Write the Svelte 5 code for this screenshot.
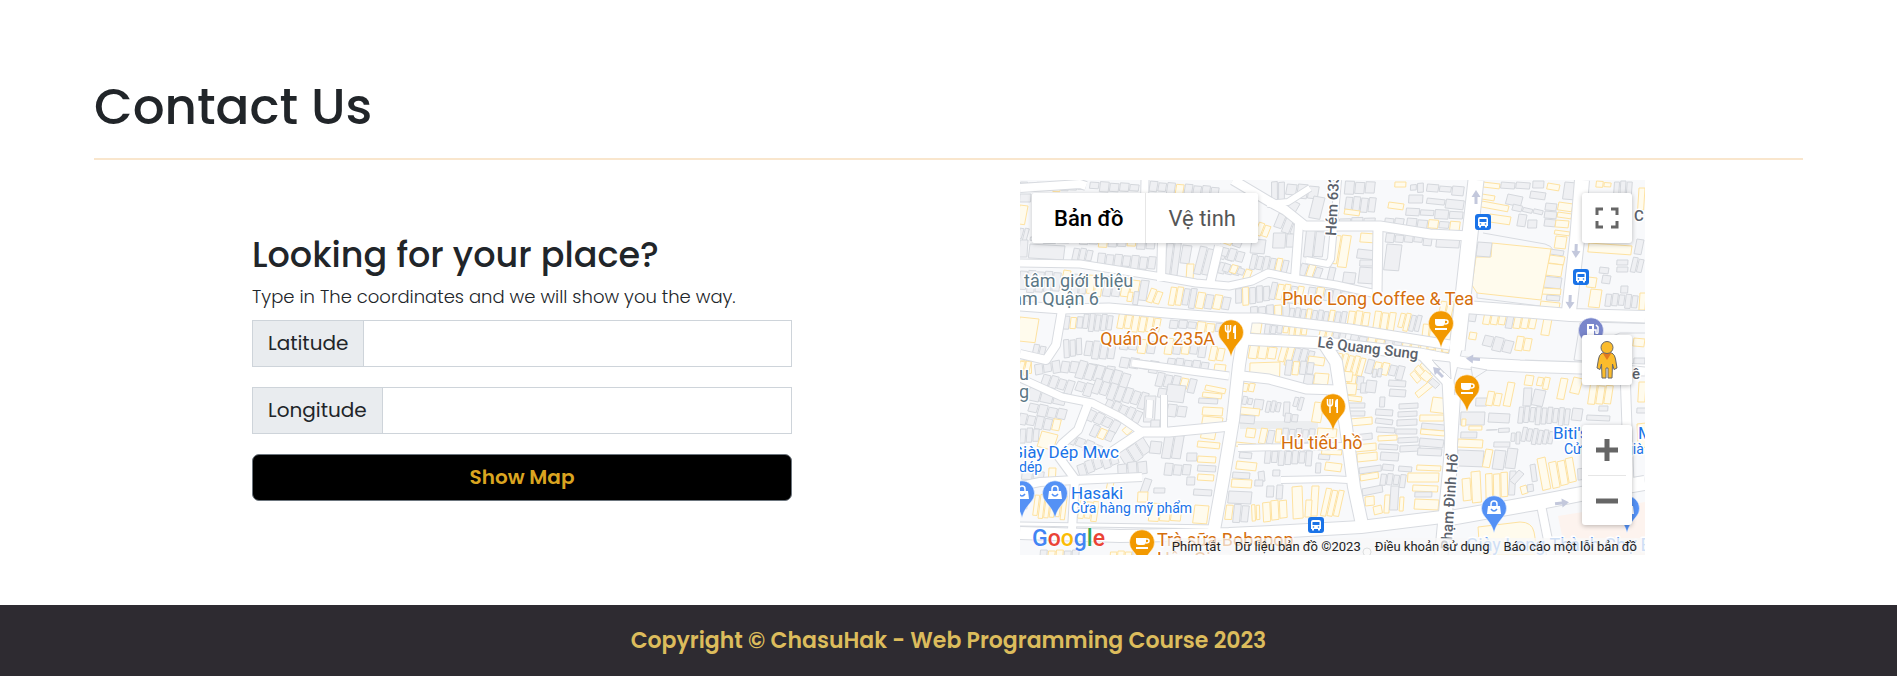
<script>
  let latitude = $state('');
  let longitude = $state('');

  // Each row of houses: start point, end point, depth, and one letter per plot (g grey, y yellow)
  const rows = [
    [0,2,66,3,9,'ggggyggg'],[70,1,120,4,10,'ggggg'],[130,1,200,7,12,'gggygggg'],[0,14,11,14,8,'g'],[0,25,8,26,19,'y'],[0,47,10,49,14,'gg'],
    [198,14,218,22,16,'ggg'],[199,32,230,42,13,'gggg'],[198,48,225,58,13,'gyg'],
    [0,60,8,60,17,'g'],[10,64,45,66,14,'g'],[54,67,74,70,14,'ggg'],[78,73,137,77,14,'ggggggg'],[10,56,50,57,7,'ggg'],[60,56,136,60,10,'ggyggygg'],
    [147,62,162,63,36,'gg'],[163,65,172,66,18,'g'],[167,84,174,84,16,'y'],[180,66,196,69,30,'gg'],[200,68,216,73,11,'gg'],[200,82,222,87,11,'ggg'],
    [0,90,42,92,22,'ggggg'],[44,90,51,91,20,'y'],[53,93,84,95,22,'ggyy'],[85,96,130,101,20,'ggyyg'],[108,111,120,112,13,'yg'],[131,108,144,112,16,'yy'],
    [151,106,178,109,20,'yygg'],[178,112,212,117,16,'ygyg'],
    [0,137,19,139,24,'y'],[14,164,27,166,13,'gg'],[0,180,12,179,16,'yy'],[44,136,64,137,13,'gyg'],[64,133,94,135,18,'ggggg'],[99,133,142,138,17,'yyyyyy'],[150,139,205,144,10,'gggyyg'],
    [43,160,62,158,18,'ggg'],[66,160,97,163,18,'gggg'],[101,157,137,161,14,'ggyg'],[101,176,140,182,12,'gggg'],[146,158,188,162,16,'ygygg'],[148,177,190,182,12,'ggggg'],[191,166,206,168,16,'yy'],[42,180,96,187,13,'gggggg'],
    [251,2,265,1,20,'gg'],[267,3,300,6,14,'ggg'],[270,19,280,24,12,'g'],[294,16,305,18,22,'g'],[325,1,356,2,13,'ggg'],[326,16,357,18,16,'gggg'],[325,29,340,31,5,'y'],[319,38,356,37,7,'ggg'],
    [375,2,386,2,5,'y'],[390,4,404,3,9,'gg'],[407,4,445,7,9,'ggg'],[369,22,384,24,6,'y'],[389,15,403,15,8,'g'],[407,17,445,21,9,'gg'],[386,28,444,31,9,'gggg'],[365,37,385,39,8,'gg'],[387,38,441,42,10,'ggygy'],
    [259,32,284,40,18,'ggg'],[239,42,252,46,15,'yy'],[232,59,246,60,14,'g'],[253,53,280,53,15,'gg'],[202,66,226,72,12,'ggg'],[232,74,270,80,17,'ggggyg'],[205,82,233,91,10,'gygy'],
    [286,50,306,51,27,'gg'],[312,54,332,56,32,'yy'],[341,53,356,54,9,'y'],[338,69,357,71,9,'g'],[340,80,356,80,6,'g'],[340,87,355,88,16,'g'],[324,92,336,93,11,'g'],[282,82,304,88,14,'gyg'],[310,87,316,88,14,'g'],
    [215,108,250,105,18,'gyggg'],[252,102,285,107,19,'gyygy'],[289,106,338,112,15,'gygggg'],[230,127,270,123,14,'gggyg'],[270,127,310,131,13,'gggyggg'],[310,130,328,132,16,'ygg'],[329,130,351,132,17,'yyy'],[355,131,377,133,20,'yyy'],[381,132,403,136,18,'yygg'],[403,144,440,146,28,'yyyyy'],[421,120,435,122,17,'yy'],
    [366,53,413,57,9,'ggggg'],[367,64,382,65,26,'g'],[417,56,440,57,11,'g'],
    [231,142,242,143,11,'y'],[245,144,288,147,10,'gggyyyy'],[300,149,327,153,10,'yygg'],[331,154,400,164,9,'ggyyggyy'],
    [230,164,258,167,15,'yyy'],[230,183,260,182,18,'y'],[262,164,296,171,20,'yyggg'],[289,176,305,178,8,'y'],[318,172,347,178,20,'yyyyy'],[348,179,386,187,14,'gyygg'],[322,194,345,196,15,'yyg'],
    [463,2,480,4,5,'y'],[481,1,511,3,8,'gg'],[511,11,526,13,7,'g'],[528,3,540,5,6,'y'],[545,2,557,3,17,'g'],[513,1,524,1,7,'g'],[526,23,537,24,7,'g'],[525,31,537,32,7,'g'],[525,39,536,40,7,'g'],[539,22,553,24,8,'y'],[538,32,552,34,5,'y'],[536,40,549,41,7,'y'],[535,50,550,52,4,'y'],[536,56,547,57,12,'y'],
    [462,14,475,16,5,'y'],[462,21,489,26,6,'y'],[470,34,491,37,8,'y'],[488,14,503,17,10,'g'],[493,24,524,31,6,'ggg'],[499,34,507,35,12,'g'],[508,40,517,40,8,'g'],[530,69,544,71,5,'g'],[530,75,545,77,8,'y'],[525,83,543,85,12,'y'],[523,96,542,98,11,'g'],[522,108,541,109,6,'y'],[527,115,540,116,5,'g'],[521,121,540,123,7,'y'],
    [449,131,457,132,10,'g'],[465,129,518,136,16,'yyygyyy'],[524,138,532,139,17,'y'],[465,154,495,161,14,'ggg'],[497,156,513,158,16,'yy'],[450,152,457,153,7,'y'],
    [576,1,592,2,6,'yy'],[594,1,613,1,20,'ggg'],[619,8,625,8,22,'y'],[569,63,612,66,9,'y'],[617,59,624,60,15,'g'],[597,80,608,80,5,'g'],[597,87,608,87,5,'g'],[580,87,589,88,6,'g'],[583,95,591,96,8,'g'],[568,97,577,98,10,'y'],[571,109,582,110,18,'y'],[586,113,619,115,14,'ggggg'],[613,77,625,79,15,'gg'],[601,106,608,106,7,'g'],[620,113,626,113,17,'y'],[614,158,625,159,8,'y'],[614,178,625,178,8,'g'],
    [0,180,12,182,16,'yy'],[14,185,40,180,12,'ggg'],[24,193,56,202,14,'gggg'],[60,180,112,194,18,'gggggg'],[58,200,75,205,13,'gg'],[76,198,130,214,17,'ggggggg'],[88,218,124,232,14,'ggggg'],[10,206,48,214,14,'ggg'],[10,222,48,230,12,'gggg'],[0,233,42,240,13,'ggggy'],
    [70,228,102,243,13,'gggg'],[74,244,96,253,12,'gyg'],[108,245,113,250,8,'y'],[50,253,84,266,12,'gggg'],[0,248,20,248,16,'ggg'],[22,251,38,255,16,'y'],[29,288,36,288,12,'y'],[2,290,25,291,11,'gg'],[56,285,96,270,14,'ggggg'],[98,274,123,256,18,'ggg'],[97,284,127,280,14,'ggg'],
    [125,216,136,216,26,'g'],[131,240,140,240,8,'g'],[138,192,178,200,14,'gggyg'],[148,204,166,206,17,'g'],[148,224,168,226,14,'gg'],[139,208,147,209,9,'g'],[186,205,206,209,5,'y'],[183,212,202,214,5,'y'],[179,218,198,219,5,'g'],[183,227,203,228,8,'y'],[183,236,203,238,8,'y'],[195,184,206,185,8,'y'],[145,253,165,255,27,'gg'],[131,261,142,262,12,'g'],[145,283,172,285,12,'ggg'],[182,250,196,252,8,'y'],[178,261,200,263,6,'y'],[167,273,177,273,8,'g'],[178,276,196,277,6,'y'],[178,285,196,286,6,'g'],[178,294,194,295,6,'y'],[167,297,175,297,8,'g'],[125,298,132,300,16,'g'],[118,312,128,312,10,'y'],[134,308,145,308,5,'g'],[174,309,192,310,6,'g'],
    [0,313,10,314,16,'yg'],[15,314,48,316,24,'yyyyyy'],[60,320,80,322,20,'yyy'],[88,301,94,302,9,'y'],[130,323,163,325,18,'yyy'],[175,325,189,326,18,'y'],[20,370,60,370,9,'gyygg'],[90,371,120,371,9,'yyyg'],
    [266,180,295,182,15,'gygg'],[295,193,309,194,11,'y'],[285,194,294,195,12,'g'],[223,202,236,204,10,'yy'],[223,216,234,218,8,'gg'],[235,219,244,220,10,'g'],[220,227,240,229,7,'y'],[247,220,262,222,13,'ggg'],[264,222,270,222,14,'g'],[275,216,285,218,13,'gg'],[295,222,304,223,20,'y'],[220,235,235,236,8,'g'],[265,233,279,234,9,'gg'],
    [227,248,236,249,9,'y'],[241,248,256,250,17,'yg'],[256,248,296,249,15,'yggggg'],[298,248,317,249,9,'y'],[216,262,236,264,4,'y'],[245,270,293,271,15,'ggggggg'],[220,272,232,273,6,'g'],[217,281,237,283,8,'y'],[299,274,310,275,5,'g'],[302,269,322,270,5,'y'],[306,282,322,284,8,'y'],[296,283,301,283,10,'g'],[238,292,244,291,10,'g'],[253,290,260,290,6,'g'],[213,292,230,293,6,'g'],[212,299,232,300,8,'y'],[235,300,243,300,6,'g'],[209,311,232,312,12,'g'],[247,306,254,306,11,'g'],[257,305,263,305,14,'g'],[272,307,282,306,32,'y'],[292,306,299,306,30,'y'],[286,320,292,320,17,'y'],[306,308,325,311,28,'yyy'],[206,324,230,325,18,'ygg'],[231,325,240,324,18,'yy'],[242,322,267,319,21,'yyy'],[308,297,328,297,4,'y'],
    [321,191,333,192,10,'y'],[321,203,337,204,11,'y'],[325,215,342,217,5,'y'],[327,223,345,223,5,'g'],[328,231,345,231,5,'g'],[330,239,352,237,7,'y'],[333,255,352,253,6,'g'],[335,265,356,263,7,'y'],[337,274,357,272,8,'y'],[339,288,361,285,6,'g'],[340,295,358,292,6,'y'],[342,309,362,305,7,'g'],[345,317,354,316,9,'y'],[353,327,361,325,8,'y'],[365,315,370,315,18,'y'],[371,306,379,306,24,'g'],[380,317,384,317,14,'y'],
    [341,203,348,203,10,'g'],[347,200,357,201,12,'g'],[360,217,365,217,10,'g'],[369,200,386,201,6,'g'],[370,209,386,210,7,'g'],[353,188,363,189,10,'gg'],[356,229,373,230,6,'g'],[356,238,373,240,5,'g'],[357,247,375,248,5,'g'],[358,256,377,255,5,'y'],[359,264,378,265,5,'g'],[361,272,379,273,8,'g'],[363,284,374,285,6,'g'],[361,293,387,295,13,'gggg'],[379,224,398,223,5,'g'],[378,232,397,231,5,'g'],[377,240,397,239,6,'g'],[376,249,397,249,5,'g'],[378,258,398,257,5,'g'],[380,266,400,265,6,'g'],[379,286,392,287,5,'g'],[400,235,424,235,6,'y'],[402,243,425,245,6,'g'],[401,249,425,251,5,'y'],[400,258,424,260,8,'g'],[398,268,422,269,7,'g'],[397,285,421,286,5,'y'],[388,293,419,293,9,'y'],[393,305,418,306,6,'y'],[395,312,412,312,5,'g'],[395,319,419,320,10,'y'],
    [389,194,404,180,15,'yyy'],[395,213,412,199,6,'y'],[413,217,430,219,15,'y'],[405,190,421,204,8,'yg'],[456,218,467,218,8,'g'],[468,211,483,213,16,'yy'],[488,202,495,203,24,'y'],[506,195,514,196,10,'y'],[518,196,531,198,12,'yy'],[541,198,548,199,21,'y'],[554,197,563,199,16,'y'],[570,204,594,206,20,'yyy'],[504,208,512,208,18,'g'],[515,209,526,211,16,'g'],[499,226,551,228,18,'ggggggggg'],[553,228,563,229,12,'g'],[441,232,465,232,13,'g'],[442,239,446,239,7,'y'],[449,246,462,246,4,'y'],[469,233,490,234,9,'g'],[466,249,490,248,4,'gg'],[441,252,457,252,6,'g'],[438,259,463,260,8,'y'],[438,270,464,271,16,'g'],[466,269,473,270,18,'y'],[475,270,486,271,19,'g'],[488,268,498,269,20,'g'],[474,262,490,262,5,'g'],[491,252,501,252,12,'gg'],[503,247,535,251,16,'gggggg'],
    [517,279,525,277,32,'y'],[528,283,553,277,26,'yyy'],[510,285,515,284,17,'g'],[442,299,450,298,22,'y'],[451,292,460,291,31,'y'],[465,294,488,292,26,'yyy'],[490,291,496,291,24,'g'],[500,307,506,305,8,'y'],[507,305,513,304,7,'g'],[499,290,504,294,14,'g'],[579,226,588,226,5,'g'],[567,235,590,236,5,'g'],[557,288,592,284,13,'ggy'],[617,228,626,228,5,'g'],[617,244,626,243,24,'y'],[619,202,626,202,20,'y']
  ];

  function plots([x1, y1, x2, y2, depth, pattern], seed) {
    const n = pattern.length;
    const length = Math.hypot(x2 - x1, y2 - y1);
    const ux = (x2 - x1) / length;
    const uy = (y2 - y1) / length;
    const step = length / n;
    return [...pattern].map((kind, i) => {
      const vary = n > 1 ? ((seed * 7 + i * 5) % 4) : 0;
      const a = i * step + (n > 1 ? 0.5 : 0);
      const b = (i + 1) * step - (n > 1 ? 0.7 : 0);
      const d0 = n > 1 ? (vary % 2) : 0;
      const d1 = Math.max(depth - vary * 0.9, 1);
      const at = (t, d) => `${(x1 + ux * t - uy * d).toFixed(1)},${(y1 + uy * t + ux * d).toFixed(1)}`;
      return { kind, points: [at(a, d0), at(b, d0), at(b - depth / 16, d1), at(a - depth / 16, d1)].join(' ') };
    });
  }
  const buildings = rows.flatMap(plots);

  const roads = [
    [7,'M0 83L60 84L79 87L136 96L176 103L209 106L232 101L248 93L272 98L316 105L352 113'],
    [9,'M0 126L42 129L89 128L146 133L209 138L240 138L330 149L430 165'],
    [11,'M222 159L305 163L400 174L445 183L500 186L625 190'],
    [8,'M279 44L275 98'],[6,'M318 0L311 79L308 84L286 80'],
    [9,'M213 0L250 22L265 30L285 46L360 46L410 54L450 56'],[6,'M247 24L268 22L290 8'],
    [15,'M456 0L446 90L437 170'],[14,'M562 0L557 60L548 140'],[9,'M358 48L357 112'],
    [12,'M445 127L500 131L550 135L625 137'],[11,'M437 165L428 200L432 280L422 375'],[12,'M434 215L430 280L421 375'],
    [12,'M226 140L219 185L213 240L203 300L194 350'],
    [12,'M305 165L316 182L326 247L334 307L343 349'],[9,'M222 196L249 199L286 209L318 210'],
    [9,'M86 276L107 262L122 252L149 252L211 246'],[6,'M218 268L322 266'],
    [7,'M0 198L42 217L72 223L100 237L122 252'],[8,'M68 224L58 250L42 264L36 273L55 299L52 350'],
    [8,'M0 306L20 302L55 300L122 297'],[7,'M112 183L209 196'],[6,'M144 215L144 250'],[6,'M130 220L129 238'],
    [8,'M142 62L141 101'],[8,'M199 66L190 104'],[8,'M42 130L36 165L26 180L0 174'],
    [12,'M0 353L100 356L209 354L270 351L341 347L430 336'],[14,'M430 338L515 323L566 313L625 303'],
    [8,'M521 325L531 375'],[9,'M605 190L609 305'],[6,'M261 300L310 299L328 300'],[8,'M400 174L434 210'],[3,'M0 344L200 347'],[8,'M0 8L60 4L66 6'],[7,'M125 0L124 50']
  ];

  const pins = [
    [211,152,'#f29900','food'],[313,226,'#f29900','food'],[421,143,'#f29900','cup'],[447,207,'#f29900','cup'],[122,362,'#f29900','cup'],
    [2,313,'#5491f5','bag'],[35,313,'#5491f5','bag'],[474,328,'#5491f5','bag'],[607,328,'#5491f5','bag'],[571,150,'#7986cb','fuel']
  ];
  const stops = [[463,42],[561,97],[296,345]];
  const arrows = [[456,17,-90],[556,71,92],[550,122,92],[453,179,184],[418,192,225],[542,323,-7]];
</script>

<main>
  <section class="contact">
    <h1>Contact Us</h1>
    <div class="columns">
      <form onsubmit={(e) => e.preventDefault()}>
        <h2>Looking for your place?</h2>
        <p>Type in The coordinates and we will show you the way.</p>
        <div class="field">
          <label for="latitude">Latitude</label>
          <input id="latitude" type="text" bind:value={latitude} />
        </div>
        <div class="field">
          <label for="longitude">Longitude</label>
          <input id="longitude" type="text" bind:value={longitude} />
        </div>
        <button class="submit" type="submit">Show Map</button>
      </form>

      <div class="map">
        <svg class="canvas" viewBox="0 0 625 375" preserveAspectRatio="xMidYMid slice">
          <rect width="625" height="375" fill="#f8f9fb" />
          <rect x="220" y="241" width="78" height="8" fill="#eceef0" />
          {#each buildings as b}
            <polygon points={b.points} class={b.kind} />
          {/each}
          <polygon class="y" points="472,63 531,69 521,120 457,113 452,105 456,77 471,77" />
          <polygon class="g" points="458,62 472,63 470,77 456,76" />
          <path d="M463 53L525 64Q532 66 533 70" class="edge" />
          <path d="M457 113L457 118L520 126" class="edge" />
          <path d="M458 347L500 342Q512 342 514 352L518 375H460Z" class="y" />
          <path d="M538 336L625 322V375H546Z" fill="#fdf3ee" />
          <g fill="none" stroke="#d8dbe0" stroke-linejoin="round">
            {#each roads as [w, d]}<path {d} stroke-width={w + 2} />{/each}
          </g>
          <g fill="none" stroke="#fff" stroke-linejoin="round">
            {#each roads as [w, d]}<path {d} stroke-width={w} />{/each}
          </g>
          <path d="M412 180L430 182L431 199Z M451 187L467 190L453 199Z" class="island" />
          <path d="M554 180L560 143Q562 140 567 141L625 143M590 157L600 153L625 153M554 180L625 187" class="edge" />
          {#each arrows as [x, y, r]}
            <path transform="translate({x} {y}) rotate({r})" d="M-7-1.5H0V-4.5L7 0L0 4.5V1.5H-7Z" fill="#c3c8dc" />
          {/each}
          {#each stops as [x, y]}
            <g transform="translate({x} {y})">
              <rect x="-8" y="-8" width="16" height="16" rx="3" fill="#1a73e8" />
              <path d="M-5-3Q-5-5-3-5H3Q5-5 5-3V4H4V5.500H2V4H-2V5.500H-4V4H-5Z" fill="#fff" />
              <path d="M-3.500-3H3.500V0H-3.500Z" fill="#1a73e8" />
              <circle cx="-2.500" cy="2" r=".8" fill="#1a73e8" /><circle cx="2.500" cy="2" r=".8" fill="#1a73e8" />
            </g>
          {/each}
          {#each pins as [x, y, color, icon]}
            <g transform="translate({x} {y})">
              <path d="M0 25C-2 17-5 14-9 9A12.500 12.500 0 1 1 9 9C5 14 2 17 0 25Z" fill={color} stroke="#fff" stroke-opacity=".5" />
              {#if icon === 'food'}
                <path d="M-5.500-7V-3Q-5.500 0-3 0V7M-.5-7V-3Q-.5 0-3 0M-3-7V0" fill="none" stroke="#fff" stroke-width="1.500" />
                <path d="M2-3Q2-7 5-7V7H3.300V1H2Z" fill="#fff" />
              {:else if icon === 'cup'}
                <path d="M-6-4H4V0Q4 3 1 3H-3Q-6 3-6 0ZM-6 5H6V7H-6Z" fill="#fff" />
                <path d="M4-3H5Q7-3 7-1T4 1" fill="none" stroke="#fff" stroke-width="1.500" />
              {:else if icon === 'bag'}
                <path d="M-6-2H6L7 6H-7Z" fill="#fff" />
                <path d="M-3-1V-4Q-3-7 0-7T3-4V-1" fill="none" stroke="#fff" stroke-width="1.500" />
                <path d="M-3 1Q0 5 3 1" fill="none" stroke={color} stroke-width="1.500" />
              {:else}
                <path d="M-4-6H3V5H-4Z" fill="#fff" /><path d="M-2-4H1V-1H-2Z" fill={color} />
                <path d="M3 0H5V3Q7 4 7 2V-3L5-5" fill="none" stroke="#fff" stroke-width="1.500" />
              {/if}
            </g>
          {/each}
          <circle cx="347" cy="372" r="4" fill="#fff" stroke="#9aa0a6" />
          <g class="place teal">
            <text x="4" y="107">tâm giới thiệu</text><text x="79" y="125" text-anchor="end">làm Quận 6</text>
            <text x="-1" y="200">u</text><text x="-1" y="218">g</text>
          </g>
          <g class="place orange">
            <text x="195" y="165" text-anchor="end">Quán Ốc 235A</text><text x="262" y="125">Phuc Long Coffee &amp; Tea</text>
            <text x="261" y="269">Hủ tiếu hồ</text><text x="137" y="366">Trà sữa Bobapop</text><text x="137" y="385">Hậu Giang</text>
          </g>
          <g class="place blue">
            <text x="99" y="278" text-anchor="end">Giày Dép Mwc</text><text class="small" x="-1" y="292">dép</text>
            <text x="51" y="319">Hasaki</text><text class="small" x="51" y="333">Cửa hàng mỹ phẩm</text>
            <text x="533" y="259">Biti's</text><text x="618" y="259">M</text>
            <text class="small" x="544" y="274">Cử</text><text class="small" x="605" y="274">già</text>
          </g>
          <text class="place faint" x="446" y="371">Giày Long Thành Chợ B</text>
          <g class="place road">
            <text transform="translate(297 167) rotate(7)">Lê Quang Sung</text>
            <text transform="translate(316 56) rotate(-87)">Hém 633</text>
            <text transform="translate(438 274) rotate(-86)" text-anchor="end">Phạm Đình Hổ</text>
            <text x="602" y="41">n C</text><text x="612" y="199">ê</text>
          </g>
        </svg>

        <div class="types">
          <button type="button" class="active">Bản đồ</button>
          <button type="button">Vệ tinh</button>
        </div>
        <button type="button" class="tile fullscreen" aria-label="Toàn màn hình">
          <svg width="24" height="22" viewBox="0 0 24 22"><path d="M2 8V2H8M16 2H22V8M22 14V20H16M8 20H2V14" fill="none" stroke="#666" stroke-width="3" /></svg>
        </button>
        <div class="tools">
          <button type="button" class="tile" aria-label="Chế độ xem phố">
            <svg width="24" height="40" viewBox="0 0 24 40">
              <path d="M7 13H17Q20 15 20.500 19L22 28L19 29.500L17.500 24L17 38H13V28H11V38H7L6.500 24L5 29.500L2 28L3.500 19Q4 15 7 13Z" fill="#fbbc2c" stroke="#66676a" stroke-width="1" />
              <path d="M7.500 13H16.500L12 20Z" fill="#e27b20" />
              <circle cx="12" cy="7.500" r="6" fill="#fbbc2c" stroke="#66676a" />
            </svg>
          </button>
          <div class="zoom">
            <button type="button" aria-label="Phóng to"><svg width="24" height="24" viewBox="0 0 24 24"><path d="M1 12H23M12 1V23" stroke="#666" stroke-width="5" /></svg></button>
            <button type="button" aria-label="Thu nhỏ"><svg width="24" height="24" viewBox="0 0 24 24"><path d="M1 12H23" stroke="#666" stroke-width="5" /></svg></button>
          </div>
        </div>
        <a class="logo" href="#google"><span class="b">G</span><span class="r">o</span><span class="o">o</span><span class="b">g</span><span class="n">l</span><span class="r">e</span></a>
        <div class="legal">
          <a href="#keys">Phím tắt</a><span>Dữ liệu bản đồ ©2023</span><a href="#terms">Điều khoản sử dụng</a><a href="#report">Báo cáo một lỗi bản đồ</a>
        </div>
      </div>
    </div>
  </section>
  <footer>Copyright © ChasuHak - Web Programming Course 2023</footer>
</main>

<style>
  :global(body) { margin: 0; background: #fff; }
  main, button, input { font-family: Poppins, Inter, sans-serif; }
  main { color: #212529; }
  button { cursor: pointer; }
  .contact { padding: 76px 94px 50px; }
  h1 { margin: 0 0 20px; padding-bottom: 20px; border-bottom: 2px solid #f9e6cd; font-size: 50px; line-height: 62px; font-weight: 500; }
  .columns { display: grid; grid-template-columns: minmax(0, 540fr) minmax(0, 625fr); gap: 228px; padding: 0 158px; align-items: center; }
  form { display: flex; flex-direction: column; padding-bottom: 4px; }
  h2 { margin: 0; font-size: 35px; line-height: 48px; font-weight: 500; }
  p { margin: 4px 0 9px; font-size: 18px; line-height: 28px; font-weight: 300; }
  .field { display: flex; height: 47px; margin-bottom: 20px; box-sizing: border-box; border: 1px solid #ced4da; }
  label { display: flex; align-items: center; padding: 0 15px; background: #e9ecef; border-right: 1px solid #ced4da; font-size: 20px; }
  input { flex: 1; min-width: 0; padding: 0 15px; border: 0; background: #fff; font-size: 20px; }
  .submit { height: 47px; border: 1px solid #6c757d; border-radius: 7px; background: #000; color: #daa520; font-size: 20px; font-weight: 600; }
  footer { padding: 20px; background: #2e2b31; color: #dcbc5c; text-align: center; font-size: 22px; line-height: 32px; font-weight: 600; }

  .map { position: relative; aspect-ratio: 5 / 3; overflow: hidden; font-family: Roboto, sans-serif; }
  .canvas { display: block; width: 100%; height: 100%; }
  .g { fill: #eff0f3; stroke: #d5d8dd; stroke-width: 1; }
  .y { fill: #fffbed; stroke: #fee2a0; stroke-width: 1; }
  .edge { fill: none; stroke: #d8dbe0; stroke-width: 1; }
  .island { fill: #f8f9fb; stroke: #d8dbe0; }
  .place { font-size: 17px; stroke: #fff; stroke-width: 3px; stroke-linejoin: round; paint-order: stroke; }
  .teal { fill: #5b7785; font-size: 18px; }
  .orange { fill: #d56e0c; font-size: 18px; }
  .blue { fill: #1a73e8; }
  .faint { fill: #6fa3ee; font-size: 18px; }
  .small { font-size: 14px; }
  .road { fill: #5a616b; font-size: 15px; font-weight: 500; }
  .types { position: absolute; top: 13px; left: 12px; display: flex; box-shadow: 0 1px 5px #0003; border-radius: 3px; overflow: hidden; }
  .types button { height: 50px; padding: 0 22px; border: 0; background: #fff; color: #565656; font-family: inherit; font-size: 22px; }
  .types .active { color: #000; font-weight: 500; border-right: 1px solid #e6e6e6; }
  .tile { display: grid; place-items: center; width: 50px; height: 50px; padding: 0; border: 0; border-radius: 3px; background: #fff; box-shadow: 0 1px 5px #0004; }
  .fullscreen { position: absolute; top: 13px; right: 13px; }
  .tools { position: absolute; right: 13px; bottom: 30px; display: grid; gap: 40px; }
  .zoom { display: grid; width: 50px; border-radius: 3px; background: #fff; box-shadow: 0 1px 5px #0004; }
  .zoom button { display: grid; place-items: center; height: 50px; margin: 0 6px; padding: 0; border: 0; background: none; }
  .zoom button + button { border-top: 1px solid #e6e6e6; }
  .logo { position: absolute; left: 12px; bottom: 3px; font-family: "Product Sans", Roboto, sans-serif; font-size: 23px; line-height: 26px; font-weight: 500; text-decoration: none; text-shadow: 0 0 2px #fff, 0 0 2px #fff; }
  .b { color: #4285f4; } .r { color: #ea4335; } .o { color: #fbbc05; } .n { color: #34a853; }
  .legal { position: absolute; right: 0; bottom: 0; display: flex; gap: 14px; padding: 0 8px; background: #f8f8f8b3; color: #222; font-size: 13px; line-height: 17px; white-space: nowrap; }
  .legal a { color: inherit; text-decoration: none; }
</style>
